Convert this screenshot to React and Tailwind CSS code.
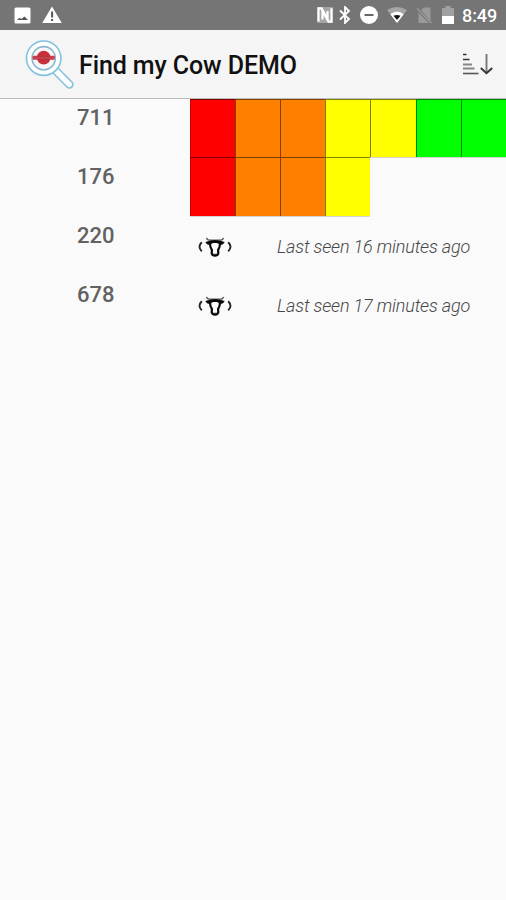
import React from 'react';

const cows = [
  { id: '711', bars: ['bg-[#ff0000]', 'bg-[#ff8000]', 'bg-[#ff8000]', 'bg-[#ffff00]', 'bg-[#ffff00]', 'bg-[#00ff00]', 'bg-[#00ff00]'] },
  { id: '176', bars: ['bg-[#ff0000]', 'bg-[#ff8000]', 'bg-[#ff8000]', 'bg-[#ffff00]'] },
  { id: '220', lastSeen: 'Last seen 16 minutes ago' },
  { id: '678', lastSeen: 'Last seen 17 minutes ago' },
];

function StatusBar() {
  return (
    <div className="flex h-[30px] items-center bg-[#757575] pl-[14px] pr-[9px] text-white">
      {/* screenshot saved */}
      <svg className="h-[17px] w-[17px]" viewBox="0 0 17 17">
        <rect x="0.5" y="0.5" width="16" height="16" rx="1.5" fill="#fff" />
        <path d="M3 13 L5.5 10.8 L7.3 12 L10.5 9.5 L14 13 Z" fill="#555" />
      </svg>
      {/* warning */}
      <svg className="ml-[11px] h-[18px] w-5" viewBox="0 0 20 18">
        <path d="M10 0.5 L19.8 17 H0.2 Z" fill="#fff" />
        <rect x="9.1" y="5.5" width="2" height="6" fill="#555" />
        <rect x="9.1" y="13" width="2" height="2" fill="#555" />
      </svg>

      <div className="ml-auto flex items-center">
        {/* nfc */}
        <svg className="h-4 w-4" viewBox="0 0 16 16">
          <rect width="16" height="16" rx="1" fill="#fff" fillOpacity="0.35" />
          <path d="M1.5 14.6 V1.3 H4.5 L10.5 12 V4" fill="none" stroke="#fff" strokeWidth="2.2" />
          <path d="M14.5 1.3 V14.7 H11.5 L5.5 4 V12.5" fill="none" stroke="#fff" strokeWidth="2.2" />
        </svg>
        {/* bluetooth */}
        <svg className="ml-[6px] h-[18px] w-3" viewBox="0 0 12 18">
          <path d="M1 4.5 L10 13 L6 17 V1 L10 5 L1 13.5" fill="none" stroke="#fff" strokeWidth="1.8" />
        </svg>
        {/* do not disturb */}
        <svg className="ml-[9px] h-[18px] w-[18px]" viewBox="0 0 18 18">
          <circle cx="9" cy="9" r="9" fill="#fff" />
          <rect x="4.5" y="8" width="9" height="2" fill="#666" />
        </svg>
        {/* wifi */}
        <svg className="ml-[9px] h-4 w-5" viewBox="0 0 20 16">
          <path d="M0 3 Q10 -3 20 3 L10 16 Z" fill="#a5a5a5" />
          <path d="M3.3 7.2 Q10 1.6 16.7 7.2 L10 16 Z" fill="#fff" />
          <path d="M6.5 8.8 Q10 7 13.5 8.8 L10 13 Z" fill="#151515" />
        </svg>
        {/* no sim */}
        <svg className="ml-[9px] h-[17px] w-[17px]" viewBox="0 0 17 17">
          <path d="M5 3 L8 0.5 H14.5 V14 Z M2.5 5.5 L13 16 H2.5 Z" fill="#999" />
          <path d="M1 1.5 L15.5 16" fill="none" stroke="#9c9c9c" strokeWidth="1.2" />
        </svg>
        {/* battery */}
        <svg className="ml-[9px] h-[18px] w-3" viewBox="0 0 12 18">
          <path d="M0 2 H3.5 V0 H8.5 V2 H12 V10 H0 Z" fill="#a0a0a0" />
          <rect y="10" width="12" height="8" fill="#fff" />
        </svg>
        <span className="ml-[8px] mt-[2px] w-[35px] whitespace-nowrap text-[18px] font-medium leading-none tracking-[-0.1px]">8:49</span>
      </div>
    </div>
  );
}

function AppLogo() {
  return (
    <svg className="mt-[2px] h-[50px] w-[50px]" viewBox="0 0 50 50">
      <path d="M31.5 31.5 L44.5 44.5" stroke="#86c0de" strokeWidth="8.4" strokeLinecap="round" />
      <path d="M31 31 L44.3 44.3" stroke="#fdfefe" strokeWidth="5.4" strokeLinecap="round" />
      <circle cx="18.7" cy="18.2" r="17.2" fill="#fdfefe" stroke="#81c1e2" strokeWidth="1.6" />
      <circle cx="18.7" cy="18.2" r="11.6" fill="#f8f8f8" stroke="#8ab8d0" strokeWidth="1.6" />
      <circle cx="18.7" cy="17.7" r="6.9" fill="#c9303b" />
      <rect x="7.6" y="15.8" width="22.2" height="4" rx="1" fill="#c9404a" />
      <path d="M12.5 16.4 H25 M13.5 19.6 H24" stroke="#9c3038" strokeWidth="0.9" strokeDasharray="2 1" />
    </svg>
  );
}

function SortIcon() {
  return (
    <svg className="h-6 w-8" viewBox="0 0 32 24" fill="none">
      <path d="M1 2.5 H4.5 M1 7.5 H7.5" stroke="#333" strokeWidth="1.7" />
      <path d="M1 12.5 H10 M1 16.5 H12.5" stroke="#858585" strokeWidth="1.8" />
      <path d="M1 21.5 H16.5" stroke="#555" strokeWidth="1.6" />
      <path d="M24.5 2 V20.5" stroke="#777" strokeWidth="1.9" />
      <path d="M18.8 16 L24.5 21.2 L30.2 16" stroke="#333" strokeWidth="1.9" />
    </svg>
  );
}

function CowIcon() {
  return (
    <svg className="h-5 w-[34px]" viewBox="0 0 34 20" fill="none">
      <path d="M3.8 5.3 Q-0.8 9.8 3.8 14.4" stroke="#222" strokeWidth="1.9" />
      <path d="M30.2 5.3 Q34.8 9.8 30.2 14.4" stroke="#222" strokeWidth="1.9" />
      {/* horns */}
      <path d="M8.5 0.8 Q9 3.2 12.5 3.2 H21.5 Q25 3.2 25.5 0.8" stroke="#555" strokeWidth="1.3" />
      {/* ears and forehead */}
      <path d="M7.3 5 L13 3.6 Q17 2.4 21 3.6 L26.7 5 L25 7.3 L22.6 8 L20.5 6.8 L18.8 6 H15.2 L13.5 6.8 L11.4 8 L9 7.3 Z" fill="#080808" />
      {/* face */}
      <path d="M12 6.5 Q12 10.5 13.9 13 L13.7 16.5 Q14.4 18.6 17 18.6 Q19.6 18.6 20.3 16.5 L20.1 13 Q22 10.5 22 6.5" stroke="#080808" strokeWidth="2.2" />
      <path d="M14.8 17.3 H19.2" stroke="#222" strokeWidth="1" />
    </svg>
  );
}

function CowRow({ cow }) {
  return (
    <div className="group flex h-[59px]">
      <div className="w-[190px] shrink-0 pl-[77px] pt-[6px] text-[22px] font-medium leading-[26px] text-[#626262]">
        {cow.id}
      </div>
      {cow.bars ? (
        <div className="flex border-b border-black/15 group-not-first:-mt-px">
          {cow.bars.map((color, i) => (
            <div key={i} className={`w-[45.12px] shrink-0 border-l border-t border-black/50 first:border-l-black/20 ${color}`} />
          ))}
        </div>
      ) : (
        <div className="flex items-center pl-[8px]">
          <CowIcon />
          <span className="-mt-px ml-[45px] whitespace-nowrap text-[18px] font-light italic tracking-[-0.17px] text-[#484848]">
            {cow.lastSeen}
          </span>
        </div>
      )}
    </div>
  );
}

export default function App() {
  return (
    <div className="flex min-h-screen flex-col overflow-hidden bg-[#fafafa] font-['Roboto',sans-serif]">
      <StatusBar />
      <header className="flex h-[69px] items-center border-b border-[#bdbdbd] bg-[#f5f5f5] pl-[25px] pr-[12px]">
        <AppLogo />
        <h1 className="ml-[4px] mt-[3px] text-[25px] font-medium tracking-[-0.1px] text-[#111]">Find my Cow DEMO</h1>
        <div className="ml-auto">
          <SortIcon />
        </div>
      </header>
      <main>
        {cows.map((cow) => (
          <CowRow key={cow.id} cow={cow} />
        ))}
      </main>
    </div>
  );
}
